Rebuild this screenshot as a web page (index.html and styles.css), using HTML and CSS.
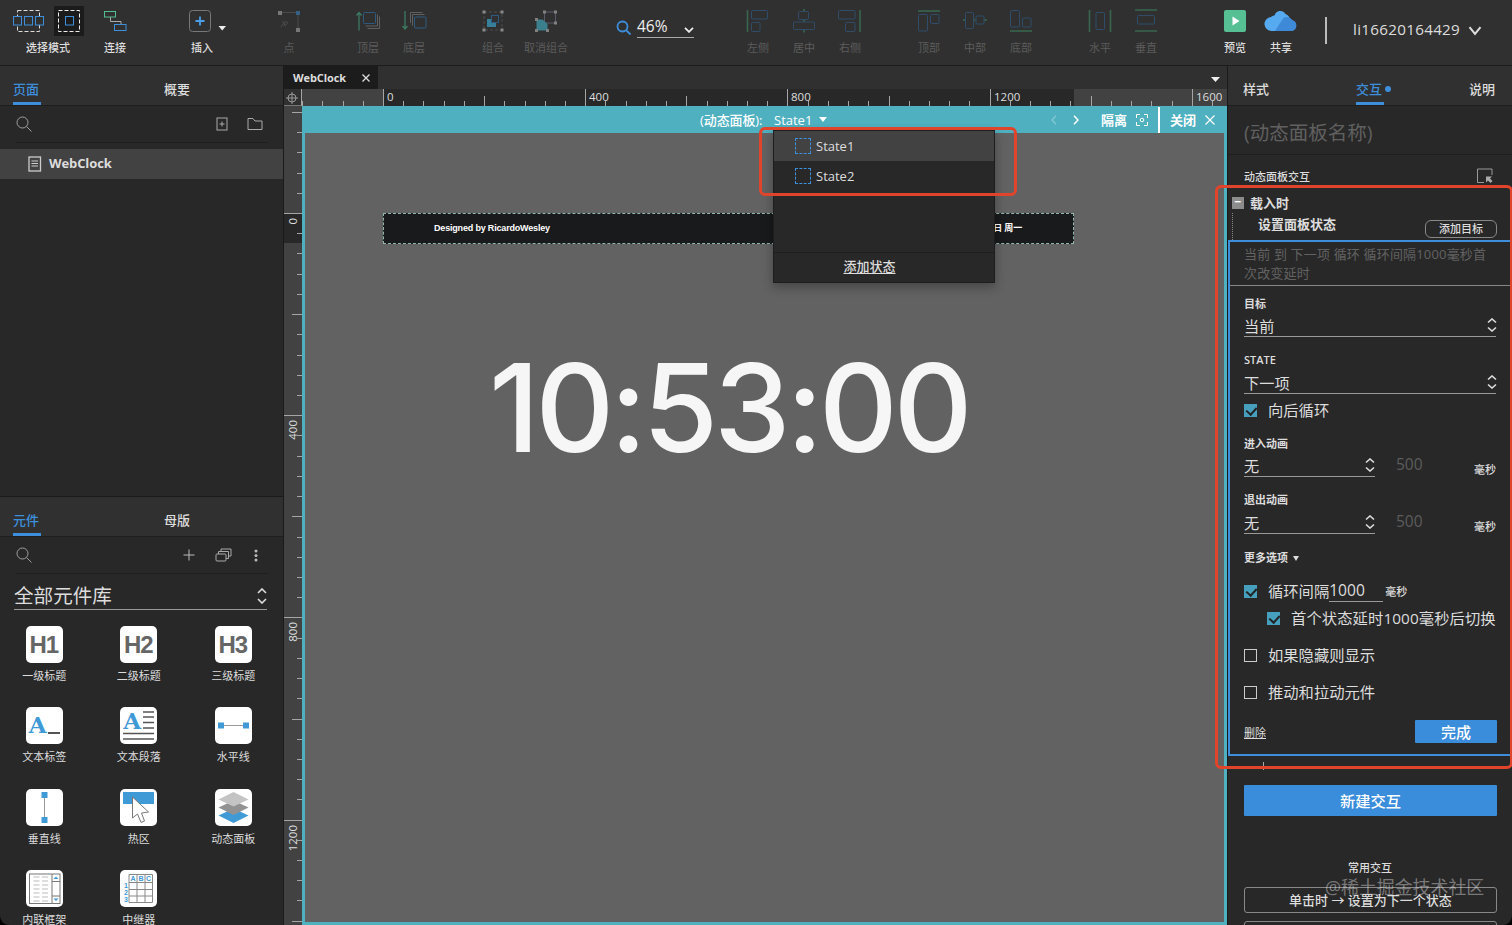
FILE: index.html
```html
<!DOCTYPE html>
<html lang="zh-CN">
<head>
  <meta charset="UTF-8">
  <title>WebClock</title>
  <meta name="viewport" content="width=device-width, initial-scale=1.0">
  <link rel="stylesheet" href="styles.css">
</head>
<body>
<div class="app">

  <!-- toolbar -->
  <header class="toolbar">
    <div class="tool tool-select">
      <div class="select-icons">
        <svg width="34" height="30" viewBox="12 6 34 30" fill="none"><rect x="17.5" y="10.5" width="22" height="21" stroke="#ddd" stroke-dasharray="4 2"/><g stroke="#3d8fdc" fill="#303030"><rect x="13.5" y="16.5" width="8" height="8.500"/><rect x="24.500" y="16.500" width="8" height="8.500"/><rect x="35.500" y="16.500" width="8" height="8.500"/></g></svg>
        <svg class="picked" width="30" height="30" viewBox="54 6 30 30" fill="none"><rect x="58.500" y="10.500" width="21" height="21" stroke="#eee" stroke-dasharray="4 2"/><rect x="65.500" y="16.500" width="8" height="8.500" stroke="#3d8fdc"/></svg>
      </div>
      <span>选择模式</span>
    </div>
    <div class="tool tool-connect">
      <svg width="24" height="24" viewBox="103 9 24 24" fill="none"><path d="M110.500 17v4.500h10.500v3" stroke="#aaa"/><rect x="104.500" y="11.500" width="11" height="5.500" stroke="#55bd92"/><rect x="114.500" y="24.500" width="11.500" height="6" stroke="#3d8fdc"/></svg>
      <span>连接</span>
    </div>
    <div class="tool tool-insert">
      <svg width="44" height="24" viewBox="180 9 44 24" fill="none" overflow="visible"><rect x="189.500" y="10.500" width="21" height="21" rx="3" stroke="#777"/><path d="M200 16.500v9M195.500 21h9" stroke="#4a9fe8" stroke-width="1.800"/><path d="M218.500 26h7.500l-3.750 4.500z" fill="#eee"/></svg>
      <span>插入</span>
    </div>
    <div class="tool off tool-point">
      <svg width="24" height="24" viewBox="277 9 24 24"><path d="M281 12.500h16M298 14v15" stroke="#4a4a4a" fill="none"/><path d="M278 11h4v4h-4zM296 28h4v4h-4z" fill="#777"/><path d="M296 11h4v4h-4z" fill="#355f85"/><path d="M281 27l3-4 1 3 3-4M282 22h5" stroke="#4c4c4c" fill="none"/></svg>
      <span>点</span>
    </div>
    <div class="group g-order">
      <div class="tool off">
        <svg width="26" height="24" viewBox="355 9 26 24" fill="none"><path d="M359 30.500v-18M356.500 15.500l2.500-3 2.500 3" stroke="#3c7a62" stroke-width="1.300"/><rect x="363.500" y="12.500" width="12" height="11" rx="1" stroke="#2f5a80"/><path d="M377.500 14.500v11.500h-12M379.500 16.500v12h-12" stroke="#606060"/></svg>
        <span>顶层</span>
      </div>
      <div class="tool off">
        <svg width="26" height="24" viewBox="401 9 26 24" fill="none"><path d="M405 11v18M402.500 26l2.500 3 2.500-3" stroke="#3c7a62" stroke-width="1.300"/><path d="M410.500 23v-10.500h12M412.500 25.500v-11h12" stroke="#606060"/><rect x="414.500" y="17" width="11.500" height="11" rx="1" stroke="#2f5a80"/></svg>
        <span>底层</span>
      </div>
    </div>
    <div class="group g-group">
      <div class="tool off">
        <svg width="24" height="24" viewBox="481 9 24 24" fill="none"><rect x="484" y="12" width="18" height="18" stroke="#4c4c4c" stroke-dasharray="3 2"/><path d="M487 19h5v4h4v4h-9z" fill="#37809a"/><rect x="491.500" y="15.500" width="7" height="7" stroke="#2f5a80"/><path d="M482.500 10.500h3v3h-3zM500.500 10.500h3v3h-3zM482.500 28.500h3v3h-3zM500.500 28.500h3v3h-3z" fill="#888"/></svg>
        <span>组合</span>
      </div>
      <div class="tool off tool-wide">
        <svg width="24" height="24" viewBox="534 9 24 24" fill="none"><rect x="544.500" y="12" width="11" height="11" stroke="#5a5a6a"/><path d="M536.500 19.500h6l5 4.500v6.500h-11z" fill="#3b7f8d"/><path d="M543 10.500h3v3h-3zM554 10.500h3v3h-3zM554 21.500h3v3h-3zM535 18h3v3h-3zM535 29h3v3h-3zM546 29h3v3h-3z" fill="#808080"/></svg>
        <span>取消组合</span>
      </div>
    </div>
    <div class="zoom">
      <svg width="16" height="16" viewBox="0 0 16 16" fill="none" stroke="#3d8fdc" stroke-width="1.800"><circle cx="6.500" cy="6.500" r="5"/><path d="M10.300 10.300l4.200 4.200"/></svg>
      <div class="zoom-value"><span>46%</span><svg width="10" height="6" viewBox="0 0 10 6" fill="none" stroke="#eee" stroke-width="1.800"><path d="M1 .8l4 4 4-4"/></svg></div>
    </div>
    <div class="group g-halign">
      <div class="tool off">
        <svg width="24" height="24" viewBox="0 0 24 24" fill="none"><path d="M1.500 1v22" stroke="#38674f" stroke-width="1.600"/><g stroke="#2f4d69"><rect x="5.500" y="1.500" width="16" height="8.500" rx="1"/><rect x="5.500" y="13.500" width="8.500" height="9" rx="1"/></g></svg>
        <span>左侧</span>
      </div>
      <div class="tool off">
        <svg width="24" height="24" viewBox="0 0 24 24" fill="none"><path d="M12 0v2M12 10v3M12 21v2.500" stroke="#38674f" stroke-width="1.600"/><g stroke="#2f4d69"><rect x="6.500" y="2.500" width="10" height="8" rx="1"/><rect x="1.500" y="13" width="21" height="7.500" rx="1"/></g></svg>
        <span>居中</span>
      </div>
      <div class="tool off">
        <svg width="24" height="24" viewBox="0 0 24 24" fill="none"><path d="M22 1v22" stroke="#38674f" stroke-width="1.600"/><g stroke="#2f4d69"><rect x=".5" y="1.500" width="16.500" height="8.500" rx="1"/><rect x="7.500" y="13.500" width="9.500" height="9" rx="1"/></g></svg>
        <span>右侧</span>
      </div>
    </div>
    <div class="group g-valign">
      <div class="tool off">
        <svg width="24" height="24" viewBox="0 0 24 24" fill="none"><path d="M1 2h22" stroke="#38674f" stroke-width="1.600"/><g stroke="#2f4d69"><rect x="1.500" y="5.500" width="9" height="16.500" rx="1"/><rect x="13.500" y="5.500" width="8.500" height="9" rx="1"/></g></svg>
        <span>顶部</span>
      </div>
      <div class="tool off">
        <svg width="24" height="24" viewBox="0 0 24 24" fill="none"><path d="M0 11h2M10 11h2.500M21 11h3" stroke="#38674f" stroke-width="1.600"/><g stroke="#2f4d69"><rect x="2.500" y="3.500" width="8" height="16" rx="1"/><rect x="13" y="7" width="8" height="8" rx="1"/></g></svg>
        <span>中部</span>
      </div>
      <div class="tool off">
        <svg width="24" height="24" viewBox="0 0 24 24" fill="none"><path d="M1 22h22" stroke="#38674f" stroke-width="1.600"/><g stroke="#2f4d69"><rect x="1.500" y="1.500" width="9" height="16.500" rx="1"/><rect x="13.500" y="9" width="8.500" height="9" rx="1"/></g></svg>
        <span>底部</span>
      </div>
    </div>
    <div class="group g-dist">
      <div class="tool off">
        <svg width="24" height="24" viewBox="0 0 24 24" fill="none"><path d="M1.500 1v22M22.500 1v22" stroke="#38674f" stroke-width="1.600"/><rect x="8" y="3.500" width="8.500" height="17" rx="1" stroke="#2f4d69"/></svg>
        <span>水平</span>
      </div>
      <div class="tool off">
        <svg width="24" height="24" viewBox="0 0 24 24" fill="none"><path d="M1 1h22M1 22h22" stroke="#38674f" stroke-width="1.600"/><rect x="3.500" y="6.500" width="17" height="8.500" rx="1" stroke="#2f4d69"/></svg>
        <span>垂直</span>
      </div>
    </div>
    <div class="group g-share">
      <div class="tool">
        <svg width="24" height="24" viewBox="0 0 24 24"><rect x="1" y="1" width="22" height="22" rx="2" fill="#56bf94"/><path d="M9.500 7.500l7 4.500-7 4.500z" fill="#fff"/></svg>
        <span>预览</span>
      </div>
      <div class="tool">
        <svg width="34" height="24" viewBox="0 0 34 24"><path d="M8 22a7 7 0 0 1-1-14C8.500 7 9.500 6.500 10.500 6.500A6 6 0 0 1 21.500 5 7 7 0 0 1 26 11a5.600 5.600 0 0 1 1.500 11z" fill="#55aaf0"/><path d="M11 22L19 9.500A6.500 6.500 0 0 1 28.500 11.200 5.600 5.600 0 0 1 28 22z" fill="#3f8ad8"/></svg>
        <span>共享</span>
      </div>
    </div>
    <div class="user">
      <span>li16620164429</span>
      <svg width="14" height="10" viewBox="0 0 14 10" fill="none" stroke="#ddd" stroke-width="2"><path d="M1.500 1.200L7 8l5.500-6.800"/></svg>
    </div>
  </header>

  <div class="main">

    <!-- pages and widget library -->
    <aside class="left">
      <section class="pages">
        <div class="tabs left-tabs"><b class="on">页面</b><b>概要</b></div>
        <div class="search-row">
          <svg width="17" height="17" viewBox="0 0 17 17" fill="none" stroke="#a0a0a0"><circle cx="6.500" cy="6.500" r="5.500"/><path d="M10.500 10.500l5 5"/></svg>
          <span class="fill"></span>
          <svg width="12" height="14" viewBox="0 0 12 14" fill="none" stroke="#aaa"><rect x="1" y="1" width="10" height="12"/><path d="M6 4.500v5M3.500 7h5"/></svg>
          <svg class="folder" width="16" height="14" viewBox="0 0 16 14" fill="none" stroke="#aaa"><path d="M1 1.500h5l2 2.500h7v8.500H1z"/></svg>
        </div>
        <div class="page-row">
          <svg width="14" height="16" viewBox="0 0 14 16" fill="none" stroke="#ccc"><rect x="1" y="1" width="11.500" height="14" stroke-width="1.300"/><path d="M3.500 5h6.500M3.500 7.500h6.500M3.500 10h6.500"/></svg>
          <span>WebClock</span>
        </div>
      </section>
      <section class="library">
        <div class="tabs left-tabs"><b class="on">元件</b><b>母版</b></div>
        <div class="search-row lib-search">
          <svg width="17" height="17" viewBox="0 0 17 17" fill="none" stroke="#a0a0a0"><circle cx="6.500" cy="6.500" r="5.500"/><path d="M10.500 10.500l5 5"/></svg>
          <span class="fill"></span>
          <svg width="12" height="12" viewBox="0 0 12 12" stroke="#bbb"><path d="M6 .5v11M.5 6h11"/></svg>
          <svg class="stack" width="17" height="14" viewBox="0 0 17 14" fill="none" stroke="#aaa"><rect x="1" y="6" width="10" height="7" rx="1"/><path d="M3.500 6v-2.500h10v7h-2.500M6 3.500V1h10v7h-2.500"/></svg>
          <svg class="dots" width="4" height="13" viewBox="0 0 4 13" fill="#bbb"><circle cx="2" cy="2" r="1.500"/><circle cx="2" cy="6.500" r="1.500"/><circle cx="2" cy="11" r="1.500"/></svg>
        </div>
        <div class="lib-select"><span>全部元件库</span><svg class="updown" width="10" height="16" viewBox="0 0 10 16"><path d="M1 5l4-4 4 4M1 11l4 4 4-4"/></svg></div>
        <div class="widgets">
          <div class="widget"><div class="tile head">H1</div>一级标题</div>
          <div class="widget"><div class="tile head">H2</div>二级标题</div>
          <div class="widget"><div class="tile head">H3</div>三级标题</div>
          <div class="widget"><div class="tile label"><i>A</i><u></u></div>文本标签</div>
          <div class="widget"><div class="tile para"><i>A</i><svg width="37" height="37" viewBox="0 0 37 37" stroke="#555" stroke-width="1.600"><path d="M23 5h11M23 10h11M23 15.500h11M23 21h11M3 26.500h31M3 32h31"/></svg></div>文本段落</div>
          <div class="widget"><div class="tile"><svg width="37" height="37" viewBox="0 0 37 37"><path d="M6 18.500h25" stroke="#999"/><path d="M3 15.500h6v6H3zM28 15.500h6v6h-6z" fill="#3f9ad6"/></svg></div>水平线</div>
          <div class="widget"><div class="tile"><svg width="37" height="37" viewBox="0 0 37 37"><path d="M18.500 6v25" stroke="#999"/><path d="M15.500 3h6v6h-6zM15.500 28h6v6h-6z" fill="#3f9ad6"/></svg></div>垂直线</div>
          <div class="widget"><div class="tile"><svg width="37" height="37" viewBox="0 0 37 37"><path d="M3 3h31v12H3z" fill="#3f9ad6"/><path d="M12.500 8v21l5-4 3.500 8.500 3.500-1.500-3-8 7-1z" fill="#fff" stroke="#777"/></svg></div>热区</div>
          <div class="widget"><div class="tile"><svg width="37" height="37" viewBox="0 0 37 37"><path d="M18.500 19.500l15 7-15 7.500-15-7.500z" fill="#3f9ad6"/><path d="M18.500 11.500l15 7-15 7.500-15-7.500z" fill="#929292"/><path d="M18.500 3l15 7.500-15 7-15-7z" fill="#c4c4c4"/></svg></div>动态面板</div>
          <div class="widget"><div class="tile"><svg width="37" height="37" viewBox="0 0 37 37" fill="none"><rect x="3.500" y="4" width="30.500" height="29.500" stroke="#777"/><path d="M26 4v29.500M26 11.500h8M26 26h8" stroke="#777"/><path d="M7.500 7h6M16 7h6M7.500 11h6M16 11h6M7.500 15h6M16 15h6M7.500 19h6M16 19h6M7.500 23h6M16 23h6M7.500 27h6M16 27h6M7.500 31h6M16 31h6" stroke="#bbb"/><path d="M27.500 9l2.500-2.500 2.500 2.500zM27.500 28.500l2.500 2.500 2.500-2.500z" fill="#3f9ad6"/></svg></div>内联框架</div>
          <div class="widget"><div class="tile"><svg class="repeater" width="37" height="37" viewBox="0 0 37 37" fill="none"><path d="M9 4.500h23.500v28H9zM9 12.500h23.500M9 19.500h23.500M9 26h23.500M17 4.500v28M25 4.500v28" stroke="#888"/><g fill="#3f9ad6"><text x="10.500" y="11">A</text><text x="18.500" y="11">B</text><text x="26" y="11">C</text><text x="4" y="18">1</text><text x="4" y="25">2</text><text x="4" y="32">3</text></g></svg></div>中继器</div>
        </div>
      </section>
    </aside>

    <!-- canvas -->
    <main class="center">
      <div class="doc-tabs">
        <div class="doc-tab"><span>WebClock</span><svg width="8" height="8" viewBox="0 0 8 8" stroke="#ddd" stroke-width="1.300"><path d="M.5.5l7 7M7.500.5l-7 7"/></svg></div>
        <svg class="tabs-more" width="9" height="5" viewBox="0 0 9 5"><path d="M0 0h9L4.500 5z" fill="#eee"/></svg>
      </div>
      <div class="work">
        <div class="corner"><svg width="12" height="12" viewBox="0 0 12 12" fill="none" stroke="#999"><circle cx="6" cy="6" r="4"/><path d="M6 0v12M0 6h12"/></svg></div>
        <svg class="ruler" id="rulerX" width="925" height="17"></svg>
        <svg class="ruler" id="rulerY" width="18" height="819"></svg>
        <div class="stage">
          <div class="state-bar">
            <span class="bar-name">(动态面板):</span>
            <span class="bar-state">State1</span>
            <svg width="8" height="5" viewBox="0 0 8 5"><path d="M0 0h8L4 5z" fill="#fff"/></svg>
            <span class="fill"></span>
            <svg class="prev" width="6" height="10" viewBox="0 0 6 10" fill="none" stroke="#fff" stroke-width="1.300"><path d="M5 .8L1 5l4 4.200"/></svg>
            <svg class="next" width="6" height="10" viewBox="0 0 6 10" fill="none" stroke="#fff" stroke-width="1.500"><path d="M1 .8L5 5 1 9.200"/></svg>
            <b>隔离</b>
            <svg class="isolate" width="12" height="12" viewBox="0 0 12 12" fill="none" stroke="#fff"><path d="M.5 4V.5H4M8 .5h3.500V4M11.500 8v3.500H8M4 11.500H.5V8"/><circle cx="6" cy="6" r="1.800"/></svg>
            <b class="close">关闭</b>
            <svg width="10" height="10" viewBox="0 0 10 10" stroke="#fff" stroke-width="1.200"><path d="M.5.5l9 9M9.500.5l-9 9"/></svg>
          </div>
          <div class="canvas">
            <div class="banner"><span>Designed by RicardoWesley</span><span>日 周一</span></div>
            <div class="clock">10:53:00</div>
          </div>
          <div class="state-menu">
            <div class="state on"><i></i>State1</div>
            <div class="state"><i></i>State2</div>
            <div class="add-state"><u>添加状态</u></div>
          </div>
          <div class="mark mark-menu"></div>
        </div>
      </div>
    </main>

    <!-- interactions -->
    <aside class="right">
      <div class="tabs right-tabs"><b>样式</b><b class="on dot">交互</b><b>说明</b></div>
      <div class="panel-name">(动态面板名称)</div>
      <div class="section-title"><span>动态面板交互</span><svg width="16" height="16" viewBox="0 0 16 16" fill="none"><path d="M7 14.500H.5V1H15v6" stroke="#999"/><path d="M9 8.500h6L13 10.500l2.500 2.500-2 2L11 12.500l-2 2z" fill="#aaa"/></svg></div>
      <div class="event"><i>−</i>载入时</div>
      <div class="action"><span>设置面板状态</span><button class="outline">添加目标</button></div>
      <div class="editor">
        <p class="summary">当前 到 下一项 循环 循环间隔1000毫秒首次改变延时</p>
        <div class="form">
          <label>目标</label>
          <div class="select"><span>当前</span><svg class="updown" width="10" height="14" viewBox="0 0 10 14"><path d="M1 4.500l4-3.500 4 3.500M1 9.500L5 13l4-3.500"/></svg></div>
          <label class="second">STATE</label>
          <div class="select"><span>下一项</span><svg class="updown" width="10" height="14" viewBox="0 0 10 14"><path d="M1 4.500l4-3.500 4 3.500M1 9.500L5 13l4-3.500"/></svg></div>
          <div class="check loop"><i class="box yes"></i>向后循环</div>
          <label>进入动画</label>
          <div class="anim"><div class="select"><span>无</span><svg class="updown" width="10" height="14" viewBox="0 0 10 14"><path d="M1 4.500l4-3.500 4 3.500M1 9.500L5 13l4-3.500"/></svg></div><span class="ms">500</span><b>毫秒</b></div>
          <label class="second">退出动画</label>
          <div class="anim"><div class="select"><span>无</span><svg class="updown" width="10" height="14" viewBox="0 0 10 14"><path d="M1 4.500l4-3.500 4 3.500M1 9.500L5 13l4-3.500"/></svg></div><span class="ms">500</span><b>毫秒</b></div>
          <label class="more">更多选项<svg width="6" height="5" viewBox="0 0 6 5"><path d="M0 0h6L3 5z" fill="#ddd"/></svg></label>
          <div class="check interval"><i class="box yes"></i>循环间隔<span class="num">1000</span><b>毫秒</b></div>
          <div class="check first"><i class="box yes"></i>首个状态延时1000毫秒后切换</div>
          <div class="check tall"><i class="box"></i>如果隐藏则显示</div>
          <div class="check tall"><i class="box"></i>推动和拉动元件</div>
          <div class="form-end"><u>删除</u><button class="done">完成</button></div>
        </div>
      </div>
      <div class="add-hint"></div>
      <button class="new">新建交互</button>
      <div class="common">常用交互</div>
      <button class="outline preset">单击时 → 设置为下一个状态</button>
      <button class="outline preset"></button>
      <div class="mark mark-editor"></div>
      <div class="watermark">@稀土掘金技术社区</div>
    </aside>
  </div>
</div>

<script>
  // Rulers: a tick every 40 units, longer at 200, labelled at 400
  const scale = 0.5055;

  function drawRuler(id, vertical, origin, length, pageSize) {
    const thick = vertical ? 18 : 17;
    let out = '';
    const rect = (pos, off, size, w, fill) => vertical
      ? `<rect x="${off}" y="${pos}" width="${size}" height="${w}" fill="${fill}"/>`
      : `<rect x="${pos}" y="${off}" width="${w}" height="${size}" fill="${fill}"/>`;
    out += rect(0, 0, thick, length, '#424242');
    out += rect(origin, 0, thick, pageSize, '#282828');
    for (let u = -400; u * scale + origin < length; u += 40) {
      const pos = Math.round(origin + u * scale);
      if (pos < 0) continue;
      const major = u % 400 === 0;
      const size = major ? thick : u % 200 === 0 ? 10 : 5;
      out += rect(pos, thick - size, size, 1, '#a5a5a5');
      if (major) {
        out += vertical
          ? `<text transform="translate(13 ${pos + 5}) rotate(-90)" text-anchor="end">${u}</text>`
          : `<text x="${pos + 4}" y="12">${u}</text>`;
      }
    }
    document.getElementById(id).innerHTML = out;
  }

  drawRuler('rulerX', false, 81, 925, 691);
  drawRuler('rulerY', true, 107, 819, 30);
</script>
</body>
</html>
```
FILE: styles.css
```css
* { box-sizing: border-box; }
body {
  margin: 0;
  background: #000;
  color: #ddd;
  font-family: "Open Sans", "Noto Sans CJK SC", sans-serif;
  font-size: 13px;
  overflow: hidden;
}
svg { display: block; flex: none; }
i { font-style: normal; }
button { font-family: inherit; color: inherit; padding: 0; display: block; }
.fill { flex: 1; }

.app {
  width: 1512px; height: 925px; background: #282828;
  display: flex; flex-direction: column; overflow: hidden;
  border-radius: 0 0 9px 9px;
}

/* toolbar */
.toolbar {
  height: 66px; flex: none; display: flex; background: #303030;
  border-bottom: 1px solid #1c1c1c;
}
.tool {
  width: 46px; padding-top: 9px; display: flex; flex-direction: column; align-items: center;
  font-size: 11px; line-height: 16px; font-weight: 500; color: #ddd; white-space: nowrap;
}
.tool span { margin-top: 7px; }
.tool.off { color: #5c5c5c; font-weight: 400; }
.tool-select { width: 76px; margin-left: 10px; padding-top: 6px; }
.tool-select span { margin-top: 4px; }
.select-icons { display: flex; gap: 8px; }
.picked { background: #1b1b1b; }
.tool-connect { margin-left: 6px; }
.tool-insert { width: 88px; margin-left: 20px; margin-right: -20px; }
.tool-point { margin-left: 40px; }
.tool-wide { width: 60px; }
.group { display: flex; }
.g-order { margin-left: 33px; }
.g-group { margin-left: 33px; }
.zoom { display: flex; margin-left: 40px; width: 78px; padding-top: 20px; gap: 5px; }
.zoom-value {
  width: 57px; height: 20px; margin-top: -2px; border-bottom: 1px solid #aaa; display: flex;
  justify-content: space-between; font-size: 15.5px; line-height: 17px; color: #eee;
}
.zoom-value svg { margin-top: 9px; }
.g-halign { margin-left: 41px; }
.g-valign { margin-left: 33px; }
.g-dist { margin-left: 33px; }
.g-share { margin-left: 43px; }
.user {
  display: flex; align-items: center; margin: 17px 0 0 21px; height: 27px; padding-left: 26px;
  border-left: 2px solid #bbb; font-size: 15.2px; gap: 8px; line-height: 25px; letter-spacing: .3px;
}
.user span { margin-top: -2px; }

.main { flex: 1; display: flex; min-height: 0; }

/* shared tabs */
.tabs { height: 40px; background: #303030; border-bottom: 1px solid #1e1e1e; display: flex; }
.tabs b {
  font-size: 13px; font-weight: 500; line-height: 18px; height: 39px; padding-top: 14px;
  width: 28px; white-space: nowrap;
}
.tabs .on { color: #3d8fdc; border-bottom: 3px solid #3d8fdc; }
.updown { fill: none; stroke: #ddd; stroke-width: 1.6; }

/* left column */
.left { width: 284px; flex: none; border-right: 1px solid #1a1a1a; display: flex; flex-direction: column; overflow: hidden; }
.left-tabs { padding-left: 13px; gap: 123px; }
.pages { height: 431px; flex: none; border-bottom: 1px solid #1a1a1a; }
.library { flex: none; }
.search-row {
  height: 37px; margin: 0 15px 6px 16px; border-bottom: 1px solid #1f1f1f;
  display: flex; align-items: center; padding-right: 5px;
}
.folder { margin-left: 19px; }
.page-row {
  height: 30px; background: #424242; display: flex; align-items: center; padding-left: 28px;
  gap: 7px; font-weight: 700; font-size: 13px; line-height: 28px; letter-spacing: -.1px;
}
.page-row span { margin-top: -2px; }
.lib-search { margin-bottom: 0; padding-right: 10px; }
.stack { margin-left: 20px; }
.dots { margin-left: 22px; }
.lib-select {
  margin: 8px 16px 0 14px; height: 28px; border-bottom: 1px solid #999; display: flex;
  justify-content: space-between; align-items: center; font-size: 19.6px; line-height: 28px;
}
.widgets {
  display: grid; grid-template-columns: repeat(3, 94.5px); grid-auto-rows: 81.3px;
  margin: 16px 0 0 -3px;
}
.widget { display: flex; flex-direction: column; align-items: center; font-size: 11px; line-height: 16px; }
.tile {
  width: 37px; height: 37px; border-radius: 5px; background: #fff; margin-bottom: 5px;
  position: relative;
}
.head { font: bold 24px/37px "Liberation Sans", sans-serif; color: #666; text-align: center; letter-spacing: -1px; text-indent: -1px; }
.label { display: flex; align-items: flex-end; padding: 0 3px 10px; }
.label i, .para i { font: bold 23px/18px "DejaVu Serif", serif; color: #3f9ad6; }
.label u { flex: 1; height: 2px; background: #555; margin-left: 1px; }
.para i { position: absolute; left: 3px; top: 5px; }
.repeater text { font: bold 7px "Liberation Sans", sans-serif; }

/* center column */
.center { width: 943px; flex: none; display: flex; flex-direction: column; }
.doc-tabs { height: 23px; background: #303030; display: flex; justify-content: space-between; padding-right: 7px; align-items: center; }
.doc-tab {
  width: 94px; height: 23px; background: #1c1c1c; display: flex; align-items: center; padding: 0 8px 0 9px;
  justify-content: space-between; font-size: 11px; font-weight: 700; line-height: 22px; letter-spacing: -.1px;
}
.tabs-more { margin-top: 4px; }
.work { display: grid; grid-template-columns: 18px 925px; grid-template-rows: 17px 819px; }
.corner { background: #303030; padding: 3px 0 0 2px; border-right: 1px solid #a5a5a5; border-bottom: 1px solid #777; }
.ruler text { font-size: 11.5px; fill: #ddd; }
.stage { position: relative; background: #4fb0c0; padding: 0 3px 3px 3px; }
.state-bar {
  height: 27px; display: flex; align-items: center; color: #fff; padding: 0 9px 0 395px;
  font-size: 13px; font-weight: 500; line-height: 26px; white-space: nowrap;
}
.state-bar b { font-weight: 600; width: 26px; }
.bar-name { width: 74px; letter-spacing: -.1px; }
.bar-state { width: 45px; }
.prev { opacity: .3; margin-right: 16px; }
.next { margin-right: 22px; }
.isolate { margin: 0 10px 0 9px; }
.state-bar .close { border-left: 2px solid #fff; width: 47px; padding-left: 10px; }
.canvas { height: 789px; background: #626262; position: relative; overflow: hidden; }
.banner {
  position: absolute; left: 78px; top: 80px; width: 691px; height: 31px; background: #191a1c;
  border: 1px dashed #8fb5ac; font-family: "Liberation Sans", "Noto Sans CJK SC", sans-serif;
  font-size: 9px; font-weight: bold; line-height: 29px; color: #fff; padding: 0 51px 0 50px;
  display: flex; justify-content: space-between; letter-spacing: -.18px;
}
.clock {
  position: absolute; left: 184px; top: 200px;
  font: 500 122px/150px Inter, sans-serif; font-feature-settings: "calt" 0;
  letter-spacing: -4.2px; color: #f6f6f6; white-space: nowrap;
}
.state-menu {
  position: absolute; left: 471px; top: 24px; width: 222px; height: 153px; background: #282828;
  border: 1px solid #1e1e1e; box-shadow: 0 4px 10px rgba(0,0,0,.3);
  display: flex; flex-direction: column; font-weight: 500;
}
.state { height: 30px; display: flex; align-items: center; padding-left: 21px; gap: 5px; line-height: 28px; padding-bottom: 1px; }
.state.on { background: #424242; }
.state i { width: 16px; height: 16px; border: 1px dashed #3d8fdc; }
.add-state {
  margin-top: auto; height: 30px; border-top: 1px solid #1e1e1e; text-align: center;
  line-height: 27px; padding-right: 29px;
}
.add-state u { text-underline-offset: 2px; }
.mark { position: absolute; border: 3px solid #e0452b; border-radius: 6px; pointer-events: none; }
.mark-menu { left: 457px; top: 21px; width: 258px; height: 69px; }

/* right column */
.right { width: 285px; flex: none; border-left: 1px solid #1a1a1a; position: relative; }
.right-tabs { padding: 0 15px; justify-content: space-between; }
.dot { position: relative; }
.dot::after {
  content: ""; position: absolute; left: 29px; top: 20px; width: 6px; height: 6px;
  border-radius: 50%; background: #3d8fdc;
}
.panel-name { height: 49px; padding-left: 16px; font-size: 19.5px; line-height: 53px; color: #606060; border-bottom: 1px solid #1e1e1e; }
.section-title { height: 38px; padding: 13px 19px 0 16px; display: flex; justify-content: space-between; font-size: 11px; line-height: 18px; font-weight: 500; }
.event { height: 20px; display: flex; align-items: center; gap: 6px; padding-left: 4px; font-weight: bold; line-height: 18px; padding-bottom: 1px; }
.event i { width: 12px; height: 12px; background: #8c8c8c; color: #fff; line-height: 10px; text-align: center; font-size: 12px; }
.action {
  height: 27px; margin-left: 4px; padding: 0 15px 0 25px; border-left: 1px dotted #888;
  display: flex; justify-content: space-between; font-weight: bold; line-height: 23px;
}
.outline { background: none; border: 1px solid #888; border-radius: 6px; font-size: 11px; }
.action .outline { width: 72px; height: 18px; margin-top: 7px; line-height: 16px; font-weight: 500; }
.editor { border: 2px solid #3d8fdc; border-right-width: 1px; height: 516px; }
.summary { margin: 0; height: 44px; padding: 3px 20px 0 14px; color: #626262; line-height: 19px; border-bottom: 1px solid #888; font-size: 13px; letter-spacing: .17px; }
.form { padding: 9px 14px 0; }
.form label { display: block; font-size: 11px; font-weight: 600; line-height: 18px; height: 18px; }
.select {
  height: 24px; border-bottom: 1px solid #999; display: flex; justify-content: space-between;
  font-size: 15.2px; line-height: 26px; margin-right: 1px;
}
.select .updown { margin-top: 5px; margin-right: -1px; }
.form .second { margin-top: 14px; height: 19px; }
.check { display: flex; align-items: center; font-size: 15.3px; line-height: 24px; height: 24px; white-space: nowrap; }
.box { width: 13px; height: 13px; border: 1px solid #ccc; margin-right: 11px; flex: none; }
.box.yes { background: #459fbd; border: 0; position: relative; }
.box.yes::after {
  content: ""; position: absolute; left: 4px; top: 1px; width: 5px; height: 8px;
  border: solid #222; border-width: 0 2px 2px 0; transform: rotate(42deg);
}
.loop { margin: 4px 0 13px; }
.anim { display: flex; height: 24px; }
.anim .select { width: 131px; margin-right: 0; }
.anim .updown { margin-right: 0; }
.ms { font-size: 15.5px; color: #5c5c5c; line-height: 23px; margin-left: 21px; }
.anim b, .interval b { font-size: 11px; font-weight: 500; line-height: 33px; margin-left: auto; margin-right: 1px; }
.form .more { margin-top: 14px; display: flex; align-items: center; gap: 5px; height: 20px; }
.interval { margin-top: 11px; }
.num { width: 54px; height: 21px; border-bottom: 1px solid #999; line-height: 18px; font-size: 15.6px; }
.interval b { margin-left: 2px; }
.first { padding-left: 23px; margin-top: 3px; letter-spacing: .1px; }
.tall { margin-top: 13px; }
.form-end { display: flex; justify-content: space-between; margin: 16px 0 0; font-size: 11px; line-height: 26px; }
.done, .new { background: #3a8ddb; border: 0; border-radius: 1px; color: #fff; font-size: 15px; }
.done { width: 82px; height: 23px; line-height: 22px; font-weight: 500; }
.add-hint { width: 1px; height: 8px; background: #aaa; margin: 6px 0 0 35px; }
.new { width: 253px; height: 31px; margin: 15px 0 0 16px; line-height: 30px; font-size: 15.3px; font-weight: 500; }
.common { text-align: center; font-size: 11px; font-weight: 500; line-height: 18px; margin-top: 43px; }
.preset { width: 253px; height: 26px; margin: 10px 0 0 16px; border-radius: 3px; font-size: 13px; line-height: 23px; font-weight: 500; }
.preset + .preset { margin-top: 8px; }
.mark-editor { left: -13px; top: 119px; width: 298px; height: 584px; }
.watermark { position: absolute; left: 97px; top: 808px; font-size: 17.9px; line-height: 26px; color: rgba(255,255,255,.38); white-space: nowrap; }
```
